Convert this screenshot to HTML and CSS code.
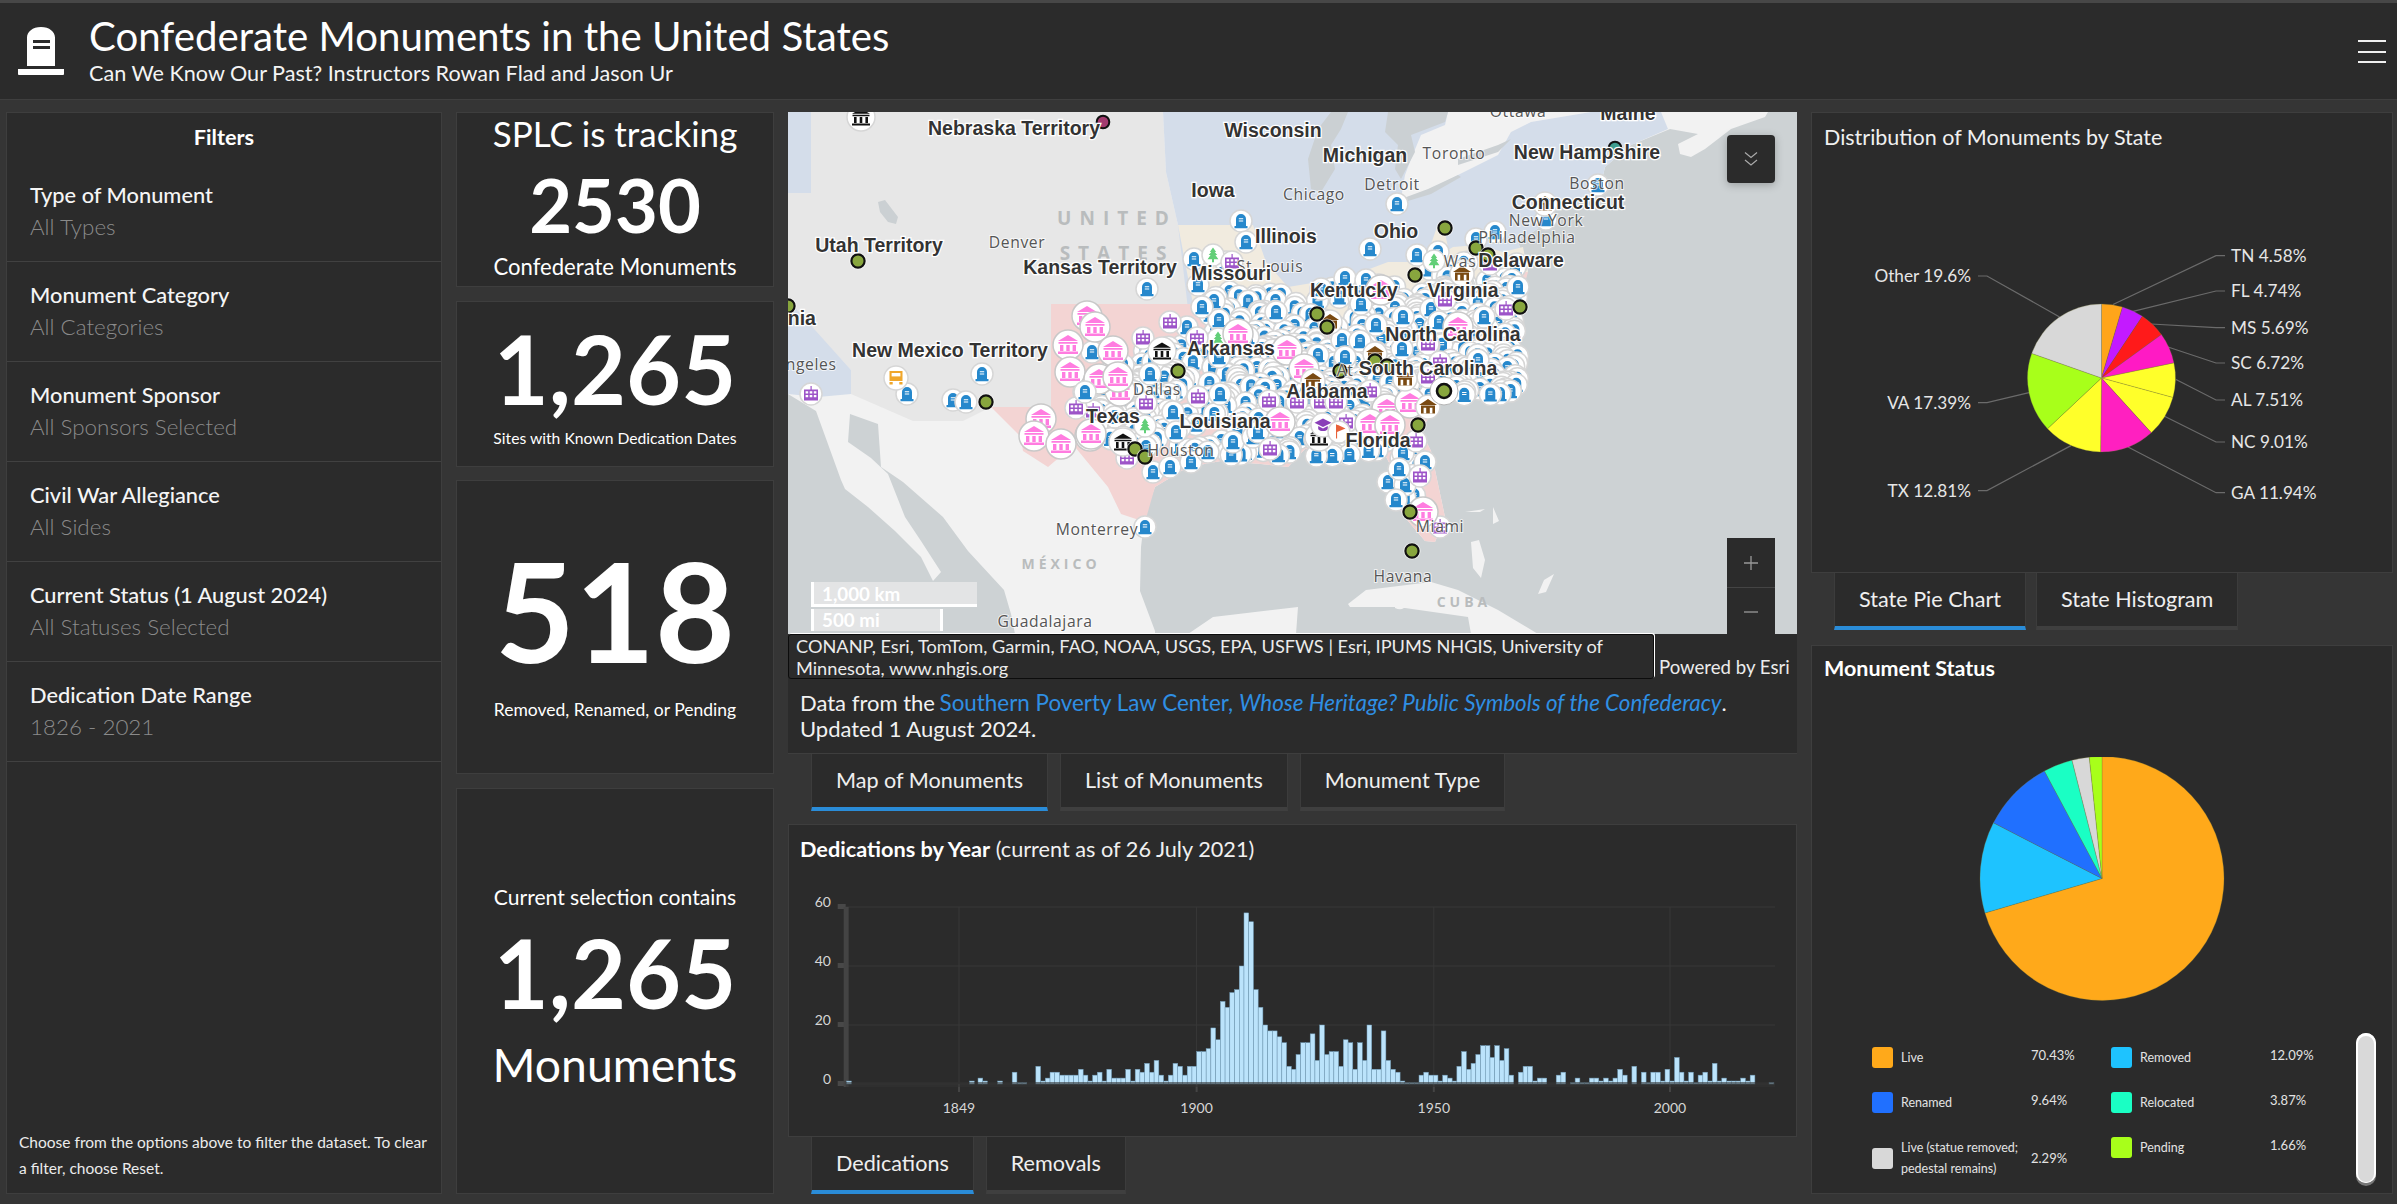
FILE: index.html
```html
<!DOCTYPE html>
<html lang="en">
<head>
<meta charset="utf-8">
<title>Confederate Monuments in the United States</title>
<link rel="stylesheet" href="styles.css">
</head>
<body>
<svg class="defs" width="0" height="0" aria-hidden="true">
  <defs>
    <symbol id="m-tomb" overflow="visible">
      <circle r="11" fill="#fff" stroke="#d6d6d6" stroke-width="1.5"/>
      <path fill="#2688cc" d="M-5 5V-2a5 5 0 0 1 10 0V5zM-6.5 5h13v2.2h-13z"/>
      <path fill="#fff" d="M-2.2 -2.8h4.4v1h-4.4zM-2.2 -.6h4.4v1h-4.4z"/>
    </symbol>
    <symbol id="m-pink" overflow="visible">
      <circle r="15" fill="#fff" stroke="#c8c8c8" stroke-width="1.5"/>
      <path fill="#ff7ce0" d="M0 -10L10 -4H-10zM-9.5 -3h19v1.8h-19zM-8 0h3.4v6h-3.4zM-1.7 0h3.4v6h-3.4zM4.6 0h3.4v6h-3.4zM-10 6.6h20v2.4h-20z"/>
    </symbol>
    <symbol id="m-purple" overflow="visible">
      <circle r="11" fill="#fff" stroke="#d6d6d6" stroke-width="1.5"/>
      <path fill="#9d54c8" d="M-.5 -8h1.2v3.5h-1.2zM-7 -4.5h14v11h-14z"/>
      <path fill="#fff" d="M-5.4 -2.8h2.6v2.2h-2.6zM-1.3 -2.8h2.6v2.2h-2.6zM2.8 -2.8h2.6v2.2h-2.6zM-5.4 1h2.6v2.2h-2.6zM-1.3 1h2.6v2.2h-2.6zM2.8 1h2.6v2.2h-2.6z"/>
    </symbol>
    <symbol id="m-dot" overflow="visible">
      <circle r="8.6" fill="#fff" opacity=".7"/>
      <circle r="6.6" fill="#88a63e" stroke="#111" stroke-width="2.2"/>
    </symbol>
    <symbol id="m-ring" overflow="visible">
      <circle r="14" fill="#fff" stroke="#b5b5b5"/>
      <circle r="7" fill="#88a63e" stroke="#111" stroke-width="2.6"/>
    </symbol>
    <symbol id="m-tree" overflow="visible">
      <circle r="11" fill="#fff" stroke="#d6d6d6" stroke-width="1.5"/>
      <path fill="#62cf78" d="M0 -7.5L3.2 -3H1.7L4.3 0H2.4L5.4 4.2H1v3h-2v-3H-5.4L-2.4 0H-4.3L-1.7 -3H-3.2z"/>
    </symbol>
    <symbol id="m-brown" overflow="visible">
      <circle r="12" fill="#fff" stroke="#d6d6d6" stroke-width="1.5"/>
      <path fill="#7a4a12" d="M0 -8L9 -2H-9zM-7 -1.4h14v8h-14z"/>
      <path fill="#fff" d="M-4.4 .8h2.6v5.8h-2.6zM1.8 .8h2.6v5.8H1.8z"/>
    </symbol>
    <symbol id="m-black" overflow="visible">
      <circle r="14" fill="#fff" stroke="#d6d6d6" stroke-width="1.5"/>
      <path fill="#111" d="M0 -8.5L9 -3.2H-9zM-8.5 -2.2h17v1.5h-17zM-7 0h2.6v6h-2.6zM-1.3 0h2.6v6h-2.6zM4.4 0h2.6v6h-2.6zM-9 6.4h18v2.2h-18z"/>
    </symbol>
    <symbol id="m-cap" overflow="visible">
      <circle r="12" fill="#fff" stroke="#d6d6d6" stroke-width="1.5"/>
      <path fill="#8a3fb8" d="M0 -6.5L8.5 -2.2L0 2L-8.5 -2.2zM-4.8 1v3.2c2.2 2.5 7.4 2.5 9.6 0V1L0 3.6z"/>
    </symbol>
    <symbol id="m-flag" overflow="visible">
      <circle r="11" fill="#fff" stroke="#d6d6d6" stroke-width="1.5"/>
      <path fill="#e8613a" d="M-3 -7.5h1.1v14h-1.1zM-2 -7.5L6.5 -3.4L-2 0z"/>
    </symbol>
    <symbol id="m-bus" overflow="visible">
      <circle r="12" fill="#fff" stroke="#d6d6d6" stroke-width="1.5"/>
      <path fill="#f0a72d" d="M-6.5 -7h13v10h-13zM-6.5 4h3.2v2.4h-3.2zM3.3 4h3.2v2.4H3.3z"/>
      <path fill="#fff" d="M-4.4 -5h8.8v3.4h-8.8z"/>
    </symbol>
  </defs>
</svg>

<header class="topbar">
  <svg class="logo" viewBox="0 0 46 48" aria-hidden="true">
    <path fill="#fff" d="M9 39V10.5C9 5 14.5 0 23 0s14 5 14 10.5V39zM0 42h46v5c0 .5-.5 1-1 1H1c-.5 0-1-.5-1-1z"/>
    <path fill="#2b2b2b" d="M15 13h17v3H15zM15 19h17v3H15z"/>
  </svg>
  <div class="titles">
    <h1 class="title">Confederate Monuments in the United States</h1>
    <p class="subtitle">Can We Know Our Past? Instructors Rowan Flad and Jason Ur</p>
  </div>
  <div class="burger" aria-label="Menu"><span></span><span></span><span></span></div>
</header>

<main class="dashboard">
  <aside class="panel filters">
    <h2 class="filters-title">Filters</h2>
    <div class="filter"><div class="filter-name">Type of Monument</div><div class="filter-value">All Types</div></div>
    <div class="filter"><div class="filter-name">Monument Category</div><div class="filter-value">All Categories</div></div>
    <div class="filter"><div class="filter-name">Monument Sponsor</div><div class="filter-value">All Sponsors Selected</div></div>
    <div class="filter"><div class="filter-name">Civil War Allegiance</div><div class="filter-value">All Sides</div></div>
    <div class="filter"><div class="filter-name">Current Status (1 August 2024)</div><div class="filter-value">All Statuses Selected</div></div>
    <div class="filter"><div class="filter-name">Dedication Date Range</div><div class="filter-value">1826 - 2021</div></div>
    <p class="filters-note">Choose from the options above to filter the dataset. To clear a filter, choose Reset.</p>
  </aside>

  <section class="stats">
    <div class="panel stat stat-a">
      <div class="s-head">SPLC is tracking</div>
      <div class="s-num">2530</div>
      <div class="s-cap">Confederate Monuments</div>
    </div>
    <div class="panel stat stat-b">
      <div class="s-big">1,265</div>
      <div class="s-small">Sites with Known Dedication Dates</div>
    </div>
    <div class="panel stat stat-c">
      <div class="s-huge">518</div>
      <div class="s-mid">Removed, Renamed, or Pending</div>
    </div>
    <div class="panel stat stat-d">
      <div class="s-cap">Current selection contains</div>
      <div class="s-big">1,265</div>
      <div class="s-word">Monuments</div>
    </div>
  </section>

  <section class="center">
    <div class="panel map-panel">
      <div class="map">
        <svg class="map-svg" viewBox="0 0 1009 522" width="1009" height="522">
          <rect width="1009" height="522" fill="#cdd2d4"/>
          <path fill="#f2f2f2" d="M0 0H980L977 5 943 17 917 37 903 45 892 42 890 32 910 22 882 17 843 33 817 55 813 72 812 80 793 87 763 97 755 113 730 130 740 157 730 197 717 227 697 250 670 262 647 295 633 319 643 339 650 372 657 405 647 430 637 429 620 409 610 395 607 362 593 335 563 330 543 335 517 337 500 355 473 352 433 349 400 355 367 375 357 402 353 435 352 479 367 519 367 522H227L223 502 216 478 180 439 155 405 115 370 93 355 90 312 62 302 60 330 83 346 100 362 117 405 133 429 153 460 145 469 133 445 107 419 80 395 57 377 53 368 28 299 0 282z"/>
          <path fill="#f2f2f2" d="M400 522L425 505 510 495 508 522zM560 492L578 478 643 470 670 478 710 498 750 522H683L680 505 610 495 562 495zM607 488q8 -6 12 4q-4 8 -12 4zM683 430l8 -2 6 20 -4 18 -8 -10zM677 400l20 -3 -5 3zM705 395l6 14 -6 3zM756 468l10 -6 -8 18 -8 2z"/>
          <path fill="#e7e7e7" d="M23 0H375L378 60 390 113 405 192H263V295H203L175 309H125L63 282V258L0 190V81H23z"/>
          <path fill="#d4ddea" d="M0 0H23V81H0zM0 188L63 258V282L30 285 0 282z"/>
          <path fill="#d4ddea" d="M375 0H660L657 13 633 23 623 47 617 63 613 87 637 80 670 63 710 43 723 20 743 10 803 0H873L880 17 843 33 817 55 813 72 812 80 793 87 763 97 755 113 730 130 740 157 730 197H400L390 113 378 60z"/>
          <path fill="#f1ebdf" d="M390 113H465L478 150 500 175 560 165 600 150 640 150 665 135 690 133 715 140 735 135 740 160H700L660 185 620 195 560 208 510 200 490 192H405zM642 135L650 112H655L660 135z"/>
          <path fill="#f3d4d3" d="M263 192H490L510 200 560 208 620 195 660 185 700 160H740L730 197 717 227 697 250 670 262 647 295 633 319 643 339 650 372 657 405 647 430 637 429 620 409 610 395 607 362 593 335 563 330 543 335 517 337 500 355 473 352 433 349 400 355 367 375 357 410 333 402 320 375 287 335 267 349 260 355 235 339 233 325 203 295H263z"/>
          <path fill="#cbd0d3" d="M543 0L530 17 520 47 523 77 533 80 547 57 543 33 553 17 560 0zM600 0L597 20 610 33 607 57 613 67 627 40 623 23 657 10 660 0zM610 92L643 82 673 65 670 63 640 77 613 87zM670 53L710 40 723 27 710 33 670 47zM90 90L97 88 110 105 108 112 100 110 92 100z"/>
          <g id="markers"></g>
          <g class="country">
            <text x="329" y="113">UNITED</text>
            <text x="329" y="148">STATES</text>
            <text class="country-s" x="273" y="457">MÉXICO</text>
            <text class="country-s" x="676" y="495">CUBA</text>
          </g>
          <g class="city">
            <text x="730" y="5">Ottawa</text>
            <text x="666" y="47">Toronto</text>
            <text x="526" y="88">Chicago</text>
            <text x="604" y="78">Detroit</text>
            <text x="809" y="77">Boston</text>
            <text x="758" y="114">New York</text>
            <text x="739" y="131">Philadelphia</text>
            <text x="229" y="136">Denver</text>
            <text x="672" y="155">Was</text>
            <text x="482" y="160">St. Louis</text>
            <text x="369" y="283">Dallas</text>
            <text x="393" y="344">Houston</text>
            <text x="309" y="423">Monterrey</text>
            <text x="652" y="420">Miami</text>
            <text x="615" y="470">Havana</text>
            <text x="257" y="515">Guadalajara</text>
            <text x="2" y="258">Los Angeles</text>
            <text x="557" y="264">At</text>
          </g>
          <g class="state">
            <text x="226" y="23">Nebraska Territory</text>
            <text x="485" y="25">Wisconsin</text>
            <text x="577" y="50">Michigan</text>
            <text x="425" y="85">Iowa</text>
            <text x="91" y="140">Utah Territory</text>
            <text x="312" y="162">Kansas Territory</text>
            <text x="443" y="168">Missouri</text>
            <text x="498" y="131">Illinois</text>
            <text x="608" y="126">Ohio</text>
            <text x="566" y="185">Kentucky</text>
            <text x="675" y="185">Virginia</text>
            <text x="799" y="47">New Hampshire</text>
            <text x="780" y="97">Connecticut</text>
            <text x="733" y="155">Delaware</text>
            <text x="665" y="229">North Carolina</text>
            <text x="640" y="263">South Carolina</text>
            <text x="443" y="243">Arkansas</text>
            <text x="539" y="286">Alabama</text>
            <text x="325" y="311">Texas</text>
            <text x="437" y="316">Louisiana</text>
            <text x="590" y="335">Florida</text>
            <text x="162" y="245">New Mexico Territory</text>
            <text x="-17" y="213">California</text>
            <text x="840" y="8">Maine</text>
          </g>
        </svg>
        <div class="scale">
          <div class="scale-km">1,000 km</div>
          <div class="scale-mi">500 mi</div>
        </div>
        <button class="map-btn map-collapse" aria-label="Collapse">
          <svg viewBox="0 0 16 16" width="16" height="16"><path fill="none" stroke="#aaa" stroke-width="1.2" d="M2 1.5L8 6.5 14 1.5M2 9L8 14 14 9"/></svg>
        </button>
        <div class="map-zoom">
          <button class="zoom-btn" aria-label="Zoom in"><svg viewBox="0 0 16 16" width="16" height="16"><path fill="none" stroke="#999" stroke-width="1.3" d="M8 1V15M1 8H15"/></svg></button>
          <button class="zoom-btn" aria-label="Zoom out"><svg viewBox="0 0 16 16" width="16" height="16"><path fill="none" stroke="#999" stroke-width="1.3" d="M1 8H15"/></svg></button>
        </div>
      </div>
      <div class="attrib-row">
        <div class="attrib">CONANP, Esri, TomTom, Garmin, FAO, NOAA, USGS, EPA, USFWS | Esri, IPUMS NHGIS, University of Minnesota, www.nhgis.org</div>
        <div class="powered">Powered by Esri</div>
      </div>
      <p class="source">Data from the <a href="#">Southern Poverty Law Center, <em>Whose Heritage? Public Symbols of the Confederacy</em></a>.<br>Updated 1 August 2024.</p>
    </div>
    <nav class="tabs tabs-map">
      <span class="tab is-active">Map of Monuments</span>
      <span class="tab">List of Monuments</span>
      <span class="tab">Monument Type</span>
    </nav>
    <div class="panel hist-panel">
      <h3 class="panel-title"><b>Dedications by Year</b> (current as of 26 July 2021)</h3>
      <svg id="hist" class="hist" viewBox="0 0 1007 250" width="1007" height="250"></svg>
    </div>
    <nav class="tabs">
      <span class="tab is-active">Dedications</span>
      <span class="tab">Removals</span>
    </nav>
  </section>

  <section class="right">
    <div class="panel state-panel">
      <h3 class="panel-title state-title">Distribution of Monuments by State</h3>
      <svg id="pie-state" class="pie-state" viewBox="0 0 580 410" width="580" height="410"></svg>
    </div>
    <nav class="tabs tabs-state">
      <span class="tab is-active">State Pie Chart</span>
      <span class="tab">State Histogram</span>
    </nav>
    <div class="panel status-panel">
      <h3 class="panel-title status-title">Monument Status</h3>
      <svg id="pie-status" class="pie-status" viewBox="0 0 580 250" width="580" height="250"></svg>
      <div class="legend">
        <div class="lg-item"><i class="sw sw-live"></i><span class="lg-name">Live</span><span class="lg-val">70.43%</span></div>
        <div class="lg-item"><i class="sw sw-removed"></i><span class="lg-name">Removed</span><span class="lg-val">12.09%</span></div>
        <div class="lg-item"><i class="sw sw-renamed"></i><span class="lg-name">Renamed</span><span class="lg-val">9.64%</span></div>
        <div class="lg-item"><i class="sw sw-relocated"></i><span class="lg-name">Relocated</span><span class="lg-val">3.87%</span></div>
        <div class="lg-item lg-low"><i class="sw sw-statue"></i><span class="lg-name">Live (statue removed; pedestal remains)</span><span class="lg-val">2.29%</span></div>
        <div class="lg-item"><i class="sw sw-pending"></i><span class="lg-name">Pending</span><span class="lg-val">1.66%</span></div>
      </div>
      <div class="thumb"></div>
    </div>
  </section>
</main>
<script src="charts.js"></script>
</body>
</html>
```

FILE: styles.css
```css
* { box-sizing: border-box; }
html, body { margin: 0; padding: 0; }
body {
  width: 2397px;
  height: 1204px;
  overflow: hidden;
  background: #353535;
  color: #fff;
  font-family: Lato, "Open Sans", "Liberation Sans", sans-serif;
}
.defs { position: absolute; }

.topbar {
  height: 100px;
  background: #2b2b2b;
  border-top: 3px solid #474747;
  border-bottom: 1px solid #3f3f3f;
  display: flex;
  align-items: flex-start;
  padding: 24px 11px 0 18px;
}
.logo { width: 46px; height: 48px; flex: none; }
.titles { margin-left: 25px; margin-top: -16.5px; flex: 1; }
.title { margin: 0; font-size: 40.2px; line-height: 50px; font-weight: 400; }
.subtitle { margin: -1.5px 0 0; font-size: 21.6px; line-height: 28px; color: #f4f4f4; }
.burger { width: 28px; display: flex; flex-direction: column; gap: 8.5px; margin-top: 13px; }
.burger span { display: block; height: 2px; background: #f0f0f0; }

.dashboard {
  display: grid;
  grid-template-columns: 436px 318px 1009px 582px;
  column-gap: 14px;
  padding: 12px 5px 9px 6px;
  height: 1101px;
}
.panel { background: #2b2b2b; border: 1px solid #3e3e3e; }

.filters { position: relative; }
.filters-title { margin: 0; height: 49px; font-size: 21.7px; line-height: 48px; font-weight: 700; text-align: center; }
.filter { height: 100px; padding: 18px 23px 0; border-bottom: 1px solid #414141; }
.filter-name { font-size: 21.8px; line-height: 30px; font-weight: 500; color: #f5f5f5; }
.filter-value { font-size: 22.4px; line-height: 34px; font-weight: 300; color: #8a8a8a; }
.filters-note {
  position: absolute; left: 12px; right: 8px; bottom: 12px; margin: 0;
  font-size: 15.5px; line-height: 26px; color: #ececec;
}

.stats { display: grid; grid-template-rows: 175px 166px 294px 406px; row-gap: 13.5px; }
.stat { text-align: center; }
.stat-b { padding-top: 13.5px; }
.stat-c { padding-top: 59px; }
.stat-d { padding-top: 91px; }
.s-head { font-size: 35px; line-height: 40px; }
.s-num { font-size: 74px; line-height: 103px; font-weight: 700; }
.s-cap { font-size: 22.1px; line-height: 34px; }
.stat-a .s-cap { margin-top: -6px; }
.stat-d .s-cap { font-size: 21.1px; }
.s-big { font-size: 95px; line-height: 106px; font-weight: 700; }
.s-small { font-size: 15.7px; line-height: 30px; margin-top: 1.5px; }
.s-huge { font-size: 138px; line-height: 140px; font-weight: 700; }
.s-mid { font-size: 17.5px; line-height: 52px; margin-top: 4px; }
.s-word { font-size: 46.3px; line-height: 66px; margin-top: 1.5px; }
.stat-d .s-big { line-height: 116px; }

.center { display: flex; flex-direction: column; }
.map-panel { height: 642px; border: 0; border-bottom: 1px solid #3e3e3e; }
.map { position: relative; height: 522px; overflow: hidden; }
.map-svg { display: block; }
.country text { font: 700 19px "Open Sans", sans-serif; letter-spacing: 8px; fill: #b9bcbd; text-anchor: middle; }
.country .country-s { font-size: 14px; letter-spacing: 4px; }
.city text { font: 400 15.7px "Open Sans", sans-serif; letter-spacing: .6px; fill: #555; text-anchor: middle; paint-order: stroke; stroke: rgba(255,255,255,.7); stroke-width: 2px; }
.state text { font: 700 19.5px "Liberation Sans", Arial, sans-serif; fill: #333; text-anchor: middle; paint-order: stroke; stroke: #fff; stroke-width: 2.5px; }

.scale { position: absolute; left: 23px; bottom: 3px; color: #fff; font-weight: 700; font-size: 18.8px; }
.scale-km { width: 166px; height: 25px; background: rgba(230,232,232,.85); border-left: 3px solid #fff; border-bottom: 3px solid #fff; padding-left: 8px; line-height: 23px; }
.scale-mi { width: 132px; height: 22px; margin-top: 2px; background: rgba(230,232,232,.85); border-left: 3px solid #fff; border-right: 3px solid #fff; padding-left: 8px; line-height: 22px; }

.map-btn, .zoom-btn { display: flex; align-items: center; justify-content: center; background: #2b2b2b; border: 0; padding: 0; width: 48px; }
.map-collapse { position: absolute; left: 939px; top: 23px; height: 48px; border-radius: 4px; box-shadow: 0 2px 8px rgba(0,0,0,.25); }
.map-zoom { position: absolute; left: 939px; bottom: -2px; display: flex; flex-direction: column; }
.zoom-btn { height: 49px; }
.zoom-btn + .zoom-btn { border-top: 1px solid #444; }

.attrib-row { display: flex; height: 45px; align-items: flex-end; }
.attrib {
  position: relative; z-index: 1;
  width: 866px; height: 45px; padding: 0 7px; font-size: 18.2px; line-height: 22px; color: #ececec;
  border: 1px solid #0c0c0c; border-radius: 3px; box-shadow: 1px -1px 0 #fff;
}
.powered { margin-left: 5px; font-size: 18.6px; line-height: 23px; color: #ececec; white-space: nowrap; }
.source { margin: 0; padding: 11px 12px 0; font-size: 22px; line-height: 26px; color: #f2f2f2; }
.source a { color: #2f8fe3; text-decoration: none; font-size: 22.4px; margin-left: -1px; }

.tabs { display: flex; gap: 12px; padding-left: 23px; height: 57px; flex: none; }
.tab {
  display: flex; align-items: center; padding: 0 24px 2px; font-size: 21.6px; color: #efefef;
  background: #2b2b2b; border: 1px solid #3c3c3c; border-top: 0; border-bottom: 4px solid #3f3f3f;
}
.tab.is-active { border-bottom-color: #2a8cd8; }
.tabs-map { margin-bottom: 13px; }

.hist-panel { height: 313px; }
.panel-title { margin: 0; font-size: 21.7px; font-weight: 400; line-height: 28px; padding: 10px 11px 0; color: #f0f0f0; }
.panel-title b { font-weight: 700; color: #fff; }
.hist { display: block; margin-top: 22px; }
.hist text { font-size: 14px; fill: #d6d6d6; font-family: Lato, sans-serif; }

.right { display: flex; flex-direction: column; }
.state-panel { height: 461px; }
.state-title { padding: 10px 12px 0; font-size: 21.5px; }
.pie-state { display: block; margin: 12px 0 0 -1px; }
.pie-state text { font-size: 17.2px; fill: #e6e6e6; font-family: Lato, sans-serif; }
.tabs-state { margin-bottom: 15px; gap: 10px; }
.status-panel { height: 549px; position: relative; }
.status-title { font-weight: 700; color: #fff; padding: 8px 12px 0; font-size: 21.5px; }
.pie-status { display: block; margin-top: 74.5px; }
.legend {
  position: absolute; left: 60px; top: 388.5px; width: 470px;
  display: grid; grid-template-columns: 239px 231px; grid-auto-rows: 45px;
}
.lg-item { display: flex; align-items: center; height: 45px; font-size: 12.5px; line-height: 21px; color: #e3e3e3; }
.lg-low { margin-top: 11px; }
.sw { width: 21px; height: 21px; border-radius: 3px; flex: none; margin-right: 8px; }
.lg-name { width: 130px; flex: none; }
.lg-val { font-size: 13px; margin-top: -3px; }
.lg-low .lg-val { margin-top: 0; }
.sw-live { background: #ffa91a; }
.sw-removed { background: #1ec3ff; }
.sw-renamed { background: #2070ff; }
.sw-relocated { background: #1affc4; }
.sw-statue { background: #d8d8d8; }
.sw-pending { background: #a8ff1a; }
.thumb {
  position: absolute; left: 544px; top: 387px; width: 20px; height: 150px;
  background: #d9d9d9; border-radius: 10px; box-shadow: inset 0 1px 0 2px #fff, 0 3px 0 #777;
}
```

FILE: charts.js
```js
(function () {
  var NS = 'http://www.w3.org/2000/svg';
  function el(tag, attrs, parent, text) {
    var n = document.createElementNS(NS, tag);
    for (var k in attrs) n.setAttribute(k, attrs[k]);
    if (text !== undefined) n.textContent = text;
    if (parent) parent.appendChild(n);
    return n;
  }

  /* ---------- pies ---------- */
  function pie(svg, cx, cy, r, slices) {
    var a = -Math.PI / 2, total = 0;
    slices.forEach(function (s) { total += s[0]; });
    slices.forEach(function (s) {
      var b = a + (s[0] / total) * Math.PI * 2;
      var d = 'M' + cx + ' ' + cy + 'L' + (cx + r * Math.cos(a)) + ' ' + (cy + r * Math.sin(a)) +
        'A' + r + ' ' + r + ' 0 ' + (b - a > Math.PI ? 1 : 0) + ' 1 ' +
        (cx + r * Math.cos(b)) + ' ' + (cy + r * Math.sin(b)) + 'Z';
      el('path', { d: d, fill: s[1], stroke: 'rgba(120,120,60,.55)', 'stroke-width': '.5' }, svg);
      a = b;
    });
  }

  var ps = document.getElementById('pie-state');
  var off = -51; /* svg sits 51px below the top of its panel */
  var lead = [
    ['TN 4.58%', [[302, 192.5], [405, 143.6], [414, 143.6]], 420, 'start'],
    ['FL 4.74%', [[321, 199.6], [405, 179], [414, 179]], 420, 'start'],
    ['MS 5.69%', [[340, 212], [405, 215.7], [414, 215.7]], 420, 'start'],
    ['SC 6.72%', [[357, 235], [405, 251], [414, 251]], 420, 'start'],
    ['AL 7.51%', [[365, 267.5], [405, 288], [414, 288]], 420, 'start'],
    ['NC 9.01%', [[353, 304], [405, 330], [414, 330]], 420, 'start'],
    ['GA 11.94%', [[317, 335], [405, 380.7], [414, 380.7]], 420, 'start'],
    ['TX 12.81%', [[260, 333.6], [176, 378.6], [167, 378.6]], 160, 'end'],
    ['VA 17.39%', [[218, 280.7], [176, 290.7], [167, 290.7]], 160, 'end'],
    ['Other 19.6%', [[248.6, 205], [176, 164], [167, 164]], 160, 'end']
  ];
  lead.forEach(function (l) {
    el('polyline', {
      points: l[1].map(function (p) { return p[0] + ',' + (p[1] + off); }).join(' '),
      fill: 'none', stroke: '#6b6b6b', 'stroke-width': '1.2'
    }, ps);
    el('text', { x: l[2], y: l[1][2][1] + off + 6, 'text-anchor': l[3] }, ps, l[0]);
  });
  pie(ps, 290.5, 266 + off, 74, [
    [4.58, '#ffa51a'], [4.74, '#c31aff'], [5.69, '#ff1a1a'], [6.72, '#ff1ac4'], [7.51, '#ffff2a'],
    [9.01, '#ffff2a'], [11.94, '#ff20c0'], [12.81, '#ffff2a'], [17.39, '#a8ff1a'], [19.6, '#d8d8d8']
  ]);

  pie(document.getElementById('pie-status'), 290, 121.5, 122, [
    [70.43, '#ffa91a'], [12.09, '#1ec3ff'], [9.64, '#2070ff'], [3.87, '#1affc4'], [2.29, '#d8d8d8'], [1.66, '#a8ff1a']
  ]);

  /* ---------- histogram ---------- */
  var hist = document.getElementById('hist');
  var X0 = 789, Y0 = 885; /* page position of the svg origin */
  var base = 1084 - Y0, unit = 2.95, left = 845.7 - X0, right = 1775 - X0;
  [0, 20, 40, 60].forEach(function (v) {
    var y = base - v * unit;
    el('line', { x1: left, x2: right, y1: y, y2: y, stroke: '#383838' }, hist);
    el('rect', { x: left - 8, y: y - 3, width: 8, height: 5, fill: '#484848' }, hist);
    el('text', { x: 831 - X0, y: y - 0, 'text-anchor': 'end' }, hist, String(v));
  });
  [[959, '1849'], [1196.6, '1900'], [1433.8, '1950'], [1670, '2000']].forEach(function (t) {
    var x = t[0] - X0;
    el('line', { x1: x, x2: x, y1: 907 - Y0, y2: base, stroke: '#383838' }, hist);
    el('rect', { x: x - 1, y: base, width: 2, height: 8, fill: '#444' }, hist);
    el('text', { x: x, y: 1113 - Y0, 'text-anchor': 'middle' }, hist, t[1]);
  });
  el('rect', { x: left - 2, y: 907 - Y0, width: 5, height: base - 907 + Y0 + 3, fill: '#444' }, hist);

  var early = [[105, 1], [292, 1], [305, 2], [312, 1], [335, 1], [357, 4], [365, .5], [372, .5]];
  var vals = [6,1,2,4,4,3,3,3,3,5,3,1,3,4,1,5,2,2,2,5,1,5,4,7,4,8,3,1,3,7,6,3,6,6,11,11,12,19,15,28,26,31,32,40,58,55,32,26,20,18,18,16,14,6,5,10,14,14,17,8,20,10,11,11,6,15,14,5,14,8,20,5,5,18,8,5,4,1,.5,.5,.5,3,4,3,3,1,3,2,1,6,11,5,7,10,13,13,9,13,8,12,3,0,4,6,6,1,2,2,0,0,3,4,0,.5,2,.5,.5,2,2,1,2,1,2,5,3,0,6,0,4,.5,4,4,1,5,1,9,4,1,4,.5,3,4,1,7,1,2,1,1,1,2,1,3,0,0,0,.5];
  function bar(dx, v) {
    if (!v) return;
    var x = 780 + dx / 1.522 - 2.37 - X0, h = v * unit;
    el('rect', { x: x, y: base - h, width: 4.73, height: h, fill: '#bbe3fb', stroke: '#6f9ab6', 'stroke-width': '.5' }, hist);
  }
  early.forEach(function (e) { bar(e[0], e[1]); });
  vals.forEach(function (v, i) { bar(393 + i * 7.2, v); });
  el('rect', { x: left, y: base - 2, width: right - left, height: 5, fill: 'rgba(50,50,50,.6)' }, hist);

  /* ---------- map markers ---------- */
  var g = document.getElementById('markers');
  function put(kind, list) {
    list.forEach(function (p) { el('use', { href: '#m-' + kind, x: p[0], y: p[1] }, g); });
  }
  var seed = 20240801;
  function rnd() {
    seed |= 0; seed = seed + 0x6D2B79F5 | 0;
    var t = Math.imul(seed ^ seed >>> 15, 1 | seed);
    t = t + Math.imul(t ^ t >>> 7, 61 | t) ^ t;
    return ((t ^ t >>> 14) >>> 0) / 4294967296;
  }
  var fill = [
    [500, 172, 230, 115, 230], [345, 232, 260, 112, 250], [420, 180, 90, 60, 55],
    [640, 150, 90, 100, 55], [300, 250, 70, 80, 40], [610, 335, 20, 60, 12]
  ];
  var pts = [];
  fill.forEach(function (b) {
    for (var i = 0; i < b[4]; i++) pts.push([b[0] + rnd() * b[2], b[1] + rnd() * b[3]]);
  });
  pts.sort(function (a, b) { return a[1] - b[1]; });
  put('tomb', pts);

  put('tomb', [[453,109],[458,130],[406,147],[359,177],[410,173],[426,189],[431,208],[414,195],[438,150],
    [399,215],[304,240],[365,250],[335,253],[362,262],[431,245],[488,200],[460,225],
    [119,282],[165,288],[178,290],[194,262],[365,360],[382,355],[358,335],[403,350],[420,340],[445,330],[465,325],[385,300],[388,320],
    [357,415],[609,92],[582,137],[629,143],[650,140],[557,166],[578,168],[533,177],[573,192],[615,205],[643,197],[651,210],[696,205],[730,175],
    [588,213],[554,228],[572,229],[614,237],[530,243],[557,245],[690,248],[707,120],[688,127],[758,107],[810,73],
    [296,280],[615,341],[637,350],[600,370],[617,373],[608,388],[611,357],[470,320],[432,282]]);
  put('tree', [[425,143],[430,227],[357,314],[646,149]]);
  put('purple', [[382,210],[355,226],[409,226],[358,291],[410,285],[481,289],[509,290],[533,290],[548,290],[558,310],[582,279],[628,329],[640,232],[652,250],[640,265],[632,364],[718,197],[482,337],[339,346],[305,299],[23,282],[288,296],[444,150],[657,188],[702,152],[652,415]]);
  put('pink', [[299,204],[307,215],[450,222],[499,238],[325,239],[280,233],[332,279],[302,324],[253,307],[246,324],[273,332],[282,260],[311,267],[330,265],[516,257],[492,310],[599,297],[622,291],[582,312],[602,313],[670,215],[593,178],[635,400],[303,322]]);
  put('tomb', [[297,280]]);
  put('brown', [[525,269],[587,242],[640,295],[617,267],[542,210],[674,162],[757,92]]);
  put('black', [[73,5],[374,239],[335,330],[531,325]]);
  put('cap', [[535,313]]);
  put('flag', [[551,320]]);
  put('bus', [[108,266]]);
  put('dot', [[70,149],[0,194],[198,290],[529,202],[539,215],[390,259],[587,249],[599,254],[552,259],[630,313],[624,439],[347,337],[357,345],[732,195],[657,116],[627,163],[688,136],[700,143],[622,400]]);
  put('ring', [[656,279]]);
  el('circle', { cx: 315, cy: 10, r: 6.3, fill: '#a33b6f', stroke: '#111', 'stroke-width': 2 }, g);
  el('circle', { cx: 827, cy: 36, r: 6.3, fill: '#3f9d8f', stroke: '#111', 'stroke-width': 2 }, g);
})();
```
